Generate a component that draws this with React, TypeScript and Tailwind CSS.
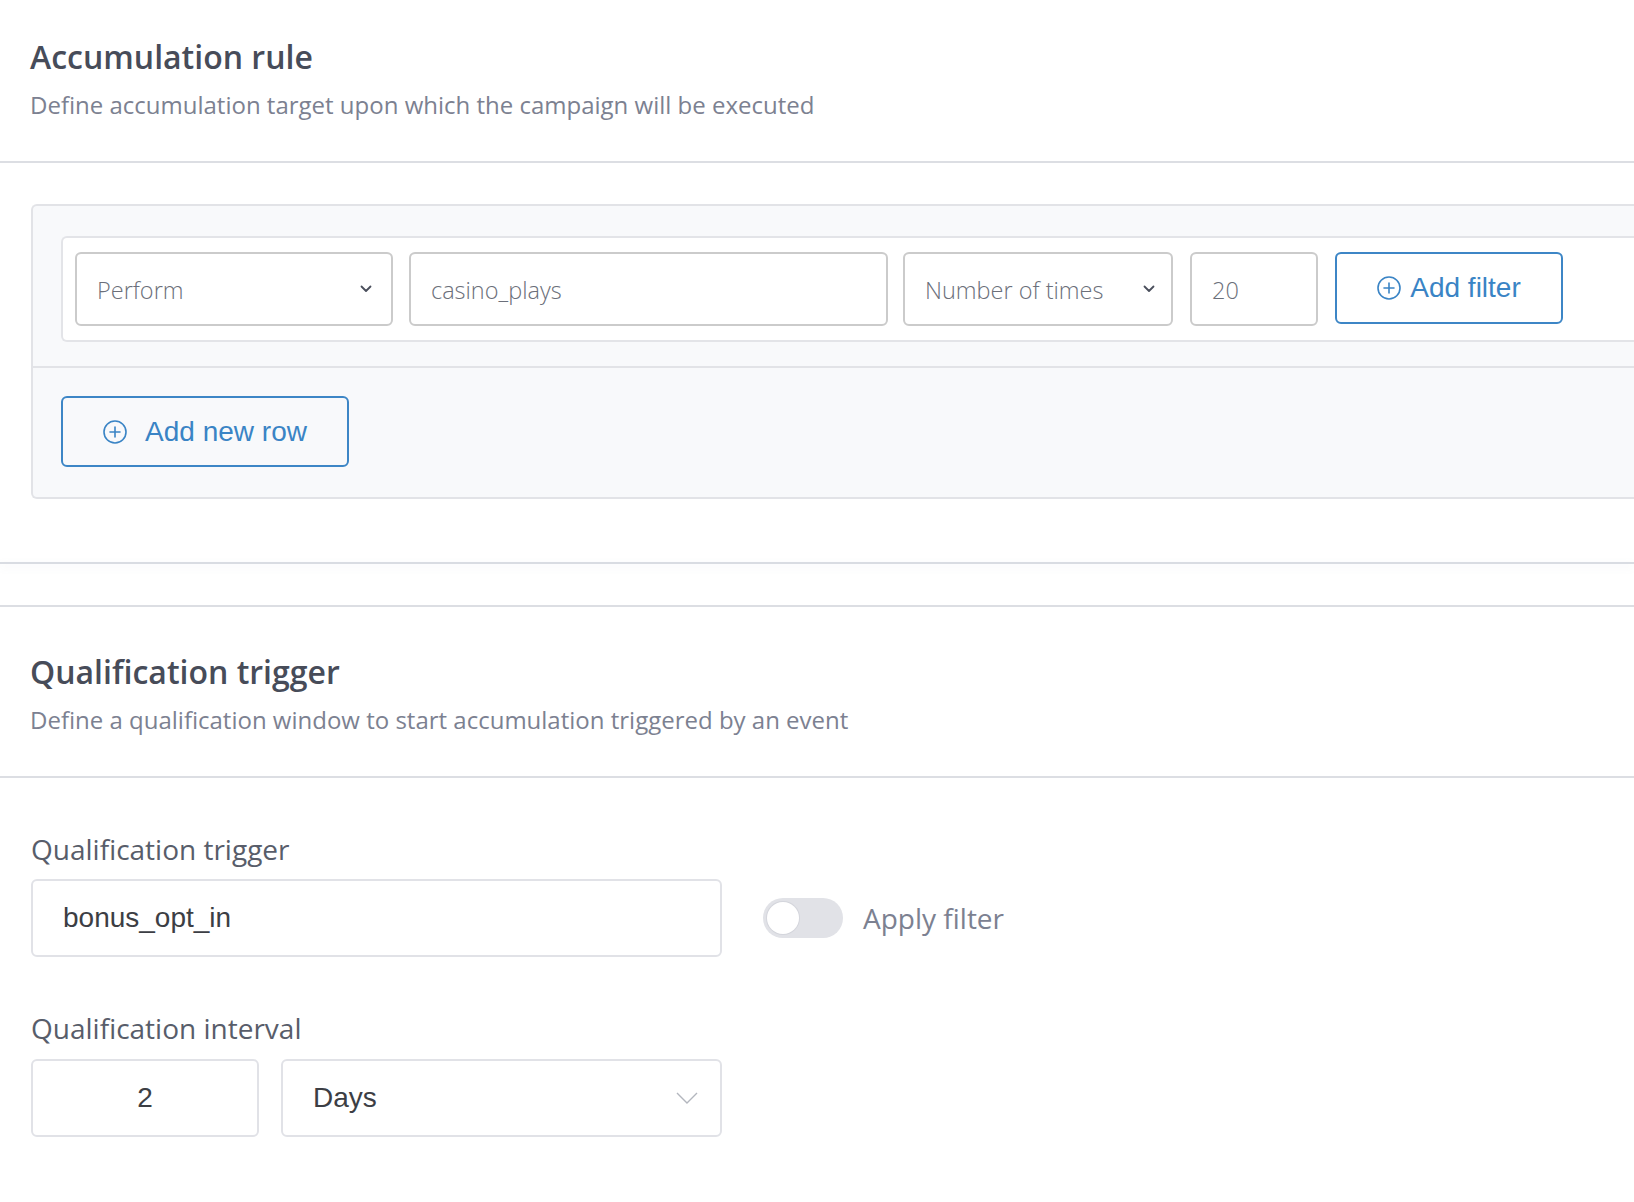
import React from 'react'

const CirclePlus: React.FC<{ size?: number }> = ({ size = 24 }) => (
  <svg width={size} height={size} viewBox="0 0 24 24" fill="none" stroke="currentColor" strokeWidth={1.6}>
    <circle cx="12" cy="12" r="11" />
    <path d="M12 7v10M7 12h10" strokeLinecap="round" />
  </svg>
)

const SmallChevron: React.FC = () => (
  <svg width="12" height="8" viewBox="0 0 12 8" fill="none" stroke="#4a4f5c" strokeWidth={1.8}>
    <path d="M1.5 1.5 6 6l4.5-4.5" strokeLinecap="round" strokeLinejoin="round" />
  </svg>
)

const SectionHeader: React.FC<{ title: string; subtitle: string; top: string }> = ({ title, subtitle, top }) => (
  <div className={`pl-[30px] pb-[40px] ${top}`}>
    <h2 className="text-[32px] leading-[44px] font-semibold text-[#474c59]">{title}</h2>
    <p className="mt-[10px] text-[24px] leading-[32px] text-[#7c8191]">{subtitle}</p>
  </div>
)

export default function App() {
  return (
    <div className="min-h-screen bg-white font-['Open_Sans',sans-serif] overflow-hidden">
      <SectionHeader
        top="pt-[35px]"
        title="Accumulation rule"
        subtitle="Define accumulation target upon which the campaign will be executed"
      />
      <div className="h-[2px] bg-[#dcdee3]" />

      <div className="pl-[31px] pt-[41px]">
        <div className="rounded-l-md border-2 border-r-0 border-[#e2e3e7] bg-[#f8f9fb]">
          <div className="pl-[28px] pt-[30px] pb-[24px]">
            <div className="flex items-center rounded-l-md border-2 border-r-0 border-[#e3e4e8] bg-white px-[12px] py-[14px] font-light text-[23.5px] text-[#6b6f7a]">
              <div className="flex h-[74px] w-[318px] items-center justify-between rounded-md border-2 border-[#cbcbcb] pl-[20px] pr-[19px]">
                <span className="pt-[4px]">Perform</span>
                <SmallChevron />
              </div>
              <div className="ml-[16px] flex h-[74px] w-[479px] items-center rounded-md border-2 border-[#cbcbcb] pl-[20px] pt-[4px]">
                casino_plays
              </div>
              <div className="ml-[15px] flex h-[74px] w-[270px] items-center justify-between rounded-md border-2 border-[#cbcbcb] pl-[20px] pr-[16px]">
                <span className="pt-[4px]">Number of times</span>
                <SmallChevron />
              </div>
              <div className="ml-[17px] flex h-[74px] w-[128px] items-center rounded-md border-2 border-[#cbcbcb] pl-[20px] pt-[4px]">
                20
              </div>
              <button className="ml-[17px] flex h-[72px] w-[228px] items-center justify-center gap-[9px] self-start rounded-md border-2 border-[#3d86c6] font-['Liberation_Sans',sans-serif] text-[28px] font-normal text-[#3a84c5]">
                <CirclePlus />
                <span>Add filter</span>
              </button>
            </div>
          </div>
          <div className="h-[2px] bg-[#e2e3e7]" />
          <div className="pl-[28px] pt-[28px] pb-[30px]">
            <button className="flex h-[71px] w-[288px] items-center justify-center gap-[18px] rounded-md border-2 border-[#3d86c6] font-['Liberation_Sans',sans-serif] text-[28px] text-[#3a84c5]">
              <CirclePlus />
              <span>Add new row</span>
            </button>
          </div>
        </div>
      </div>

      <div className="mt-[63px] h-[2px] bg-[#d9dce2] shadow-[0_3px_8px_rgba(120,130,150,0.12)]" />
      <div className="mt-[41px] h-[2px] bg-[#dcdee3]" />

      <SectionHeader
        top="pt-[43px]"
        title="Qualification trigger"
        subtitle="Define a qualification window to start accumulation triggered by an event"
      />
      <div className="h-[2px] bg-[#dcdee3]" />

      <div className="pl-[31px] pt-[52px]">
        <label className="block text-[28px] leading-[38px] text-[#585d6a]">Qualification trigger</label>
        <div className="mt-[11px] flex items-center">
          <div className="flex h-[78px] w-[691px] items-center rounded-md border-2 border-[#e1e2e7] pl-[30px] font-['Liberation_Sans',sans-serif] text-[28px] text-[#3c3e44]">
            bonus_opt_in
          </div>
          <div className="ml-[41px] flex h-[40px] w-[80px] items-center rounded-full bg-[#e1e2e7] px-[4px]">
            <div className="h-[32px] w-[32px] rounded-full bg-white shadow-[0_0_0_1px_rgba(200,202,210,0.5)]" />
          </div>
          <span className="ml-[20px] text-[28px] text-[#7c8191]">Apply filter</span>
        </div>

        <label className="mt-[52px] block text-[28px] leading-[38px] text-[#585d6a]">Qualification interval</label>
        <div className="mt-[12px] flex gap-[22px] font-['Liberation_Sans',sans-serif] text-[28px] text-[#3c3e44]">
          <div className="flex h-[78px] w-[228px] items-center justify-center rounded-md border-2 border-[#e1e2e7]">
            2
          </div>
          <div className="flex h-[78px] w-[441px] items-center justify-between rounded-md border-2 border-[#e1e2e7] pl-[30px] pr-[22px]">
            <span>Days</span>
            <svg width="22" height="12" viewBox="0 0 22 12" fill="none" stroke="#b3b6be" strokeWidth={1.4}>
              <path d="M1 1l10 10L21 1" />
            </svg>
          </div>
        </div>
      </div>
    </div>
  )
}
